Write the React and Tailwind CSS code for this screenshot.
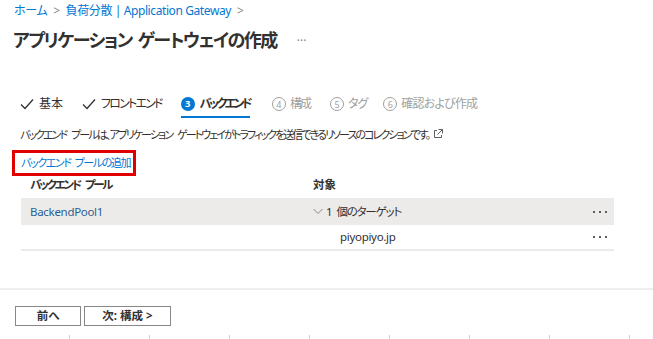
const font = "[font-family:'Noto_Sans','Noto_Sans_CJK_JP',sans-serif] [font-feature-settings:'palt']"

function Sp({ w = 5 }) {
  return <span className="inline-block" style={{ width: w }} />
}

function Check() {
  return (
    <svg width="14" height="12" viewBox="0 0 14 12" className="mr-[5px]">
      <path d="M1 6.5 L5 10.5 L13 1.5" fill="none" stroke="#323130" strokeWidth="1.3" />
    </svg>
  )
}

function StepNum({ n, active }) {
  if (active) {
    return (
      <span className="mr-[5px] flex h-[14px] w-[14px] items-center justify-center rounded-full bg-[#0078d4] text-[9.5px] font-bold leading-none tracking-normal text-white">
        {n}
      </span>
    )
  }
  return (
    <span className="mr-[4px] flex h-[14px] w-[14px] items-center justify-center rounded-full border border-[#a19f9d] text-[9px] leading-none tracking-normal text-[#a19f9d]">
      {n}
    </span>
  )
}

function Dots() {
  return (
    <div className="flex gap-[4px]">
      <span className="h-[2px] w-[2px] bg-[#605e5c]" />
      <span className="h-[2px] w-[2px] bg-[#605e5c]" />
      <span className="h-[2px] w-[2px] bg-[#605e5c]" />
    </div>
  )
}

export default function App() {
  const ticks = [0, 1, 2, 3, 4, 5, 6, 7]

  return (
    <div className={`relative h-[339px] w-[653px] overflow-hidden bg-white text-[#323130] ${font}`}>
      {/* breadcrumb */}
      <div className="flex h-[22px] items-center pl-[14px] text-[12px] tracking-[-0.4px] text-[#0078d4]">
        <span>ホーム</span>
        <span className="mx-[6px] text-[#8a8886]">&gt;</span>
        <span>負荷分散 | Application Gateway</span>
        <span className="ml-[6px] text-[#8a8886]">&gt;</span>
      </div>

      {/* title */}
      <div className="mt-[5px] flex h-[26px] items-center pl-[13px]">
        <h1 className="text-[18px] font-bold tracking-[-1.5px]">
          アプリケーション<Sp w={6} />ゲートウェイの作成
        </h1>
        <span className="ml-[20px] mt-[2px] text-[12px] text-[#8a8886]">···</span>
      </div>

      {/* tabs */}
      <div className="mt-[39px] flex h-[26px] items-start pl-[20px] text-[12px]">
        <div className="flex h-[24px] items-center">
          <Check />
          <span>基本</span>
        </div>
        <div className="ml-[19px] flex h-[24px] items-center">
          <Check />
          <span className="tracking-[-1.8px]">フロントエンド</span>
        </div>
        <div className="ml-[19px] flex h-[26px] flex-col">
          <div className="flex h-[24px] items-center font-bold">
            <StepNum n="3" active />
            <span className="tracking-[-2.6px]">バックエンド</span>
          </div>
          <div className="h-[2px] bg-[#0078d4]" />
        </div>
        <div className="ml-[22px] flex h-[24px] items-center text-[#a19f9d]">
          <StepNum n="4" />
          <span className="tracking-[-2px]">構成</span>
        </div>
        <div className="ml-[20px] flex h-[24px] items-center text-[#a19f9d]">
          <StepNum n="5" />
          <span className="tracking-[-1px]">タグ</span>
        </div>
        <div className="ml-[16px] flex h-[24px] items-center text-[#a19f9d]">
          <StepNum n="6" />
          <span className="tracking-[-0.8px]">確認および作成</span>
        </div>
      </div>

      {/* description */}
      <div className="mt-[8px] flex h-[18px] items-center pl-[20px] text-[11px] tracking-[-1.95px]">
        <span>
          バックエンド<Sp />プールは、アプリケーション<Sp />ゲートウェイがトラフィックを送信できるリソースのコレクションです。
        </span>
        <svg width="10" height="10" viewBox="0 0 10 10" className="ml-[4px] mb-[2px]">
          <path d="M4 1.5 H1.5 V8.5 H8.5 V6" fill="none" stroke="#605e5c" strokeWidth="1" />
          <path d="M5.5 0.5 H9.5 V4.5 M9.5 0.5 L4.5 5.5" fill="none" stroke="#605e5c" strokeWidth="1" />
        </svg>
      </div>

      {/* add link */}
      <div className="ml-[12px] mt-[6px] flex h-[26px] w-[124px] items-center whitespace-nowrap border-[3px] border-[#e00000] pl-[6px] text-[11px] tracking-[-1.4px] text-[#0078d4]">
        バックエンド<Sp w={4} />プールの追加
      </div>

      {/* table */}
      <div className="ml-[21px] w-[593px] text-[11.5px]">
        <div className="flex h-[22px] items-center pb-[4px] font-bold">
          <div className="w-[292px] pl-[9px] tracking-[-2.2px]">
            バックエンド<Sp />プール
          </div>
          <div>対象</div>
        </div>
        <div className="flex h-[27px] items-center bg-[#edebe9]">
          <div className="w-[292px] pl-[9px] tracking-[-0.3px] text-[#2a5f95]">BackendPool1</div>
          <div className="flex flex-1 items-center">
            <svg width="10" height="7" viewBox="0 0 10 7" className="mr-[3px]">
              <path d="M0.5 1 L5 5.5 L9.5 1" fill="none" stroke="#8a8886" strokeWidth="1" />
            </svg>
            <span className="tracking-[-1.2px]">
              1<Sp w={5} />個のターゲット
            </span>
          </div>
          <div className="pr-[7px]">
            <Dots />
          </div>
        </div>
        <div className="flex h-[26px] items-center border-b-2 border-[#edebe9]">
          <div className="w-[319px]" />
          <div className="flex-1 tracking-[-0.3px]">piyopiyo.jp</div>
          <div className="pr-[7px]">
            <Dots />
          </div>
        </div>
      </div>

      {/* footer */}
      <div className="mt-[37px] h-[2px] bg-[#eeeeee]" />
      <div className="mt-[16px] flex gap-[3px] pl-[15px] text-[11.5px] font-bold">
        <button className="flex h-[20px] w-[66px] items-center justify-center border border-[#8a8886] bg-white">前へ</button>
        <button className="flex h-[20px] w-[87px] items-center justify-center border border-[#8a8886] bg-white">次: 構成 &gt;</button>
      </div>

      <div className="absolute bottom-0 left-0 flex w-full">
        {ticks.map((t) => (
          <div key={t} className="ml-[69px] mr-[10px] h-[4px] w-px bg-[#d2d0ce]" />
        ))}
      </div>
    </div>
  )
}
